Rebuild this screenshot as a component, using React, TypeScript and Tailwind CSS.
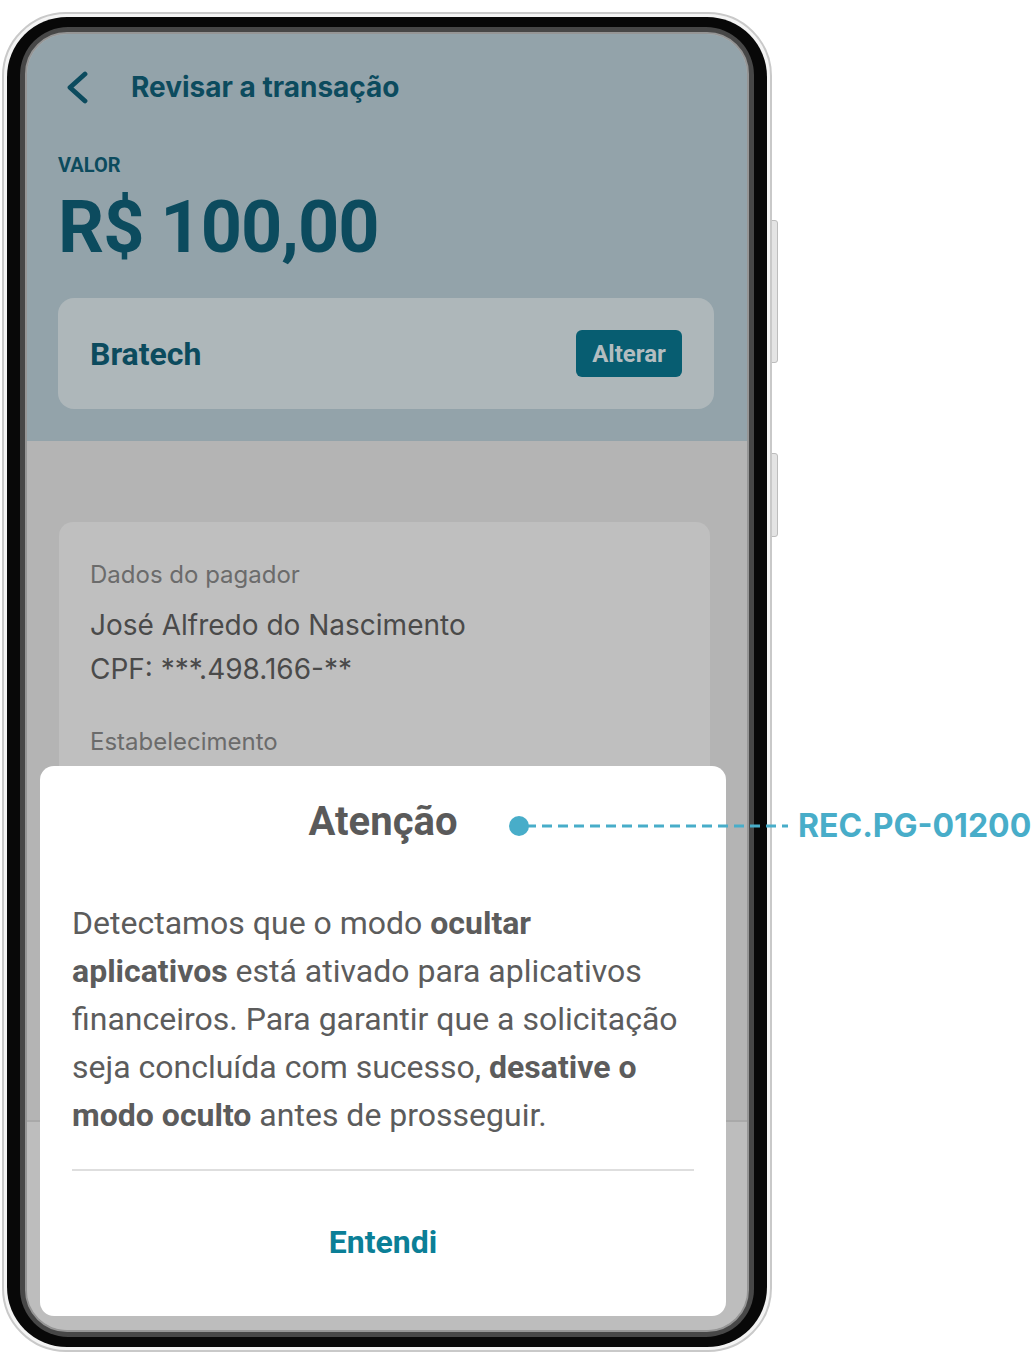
import React from "react";

const roboto = { fontFamily: "Roboto, 'Liberation Sans', sans-serif" };
const inter = { fontFamily: "Inter, 'Liberation Sans', sans-serif" };

export default function App() {
  return (
    <div className="relative w-[1036px] h-[1364px] bg-white overflow-hidden" style={roboto}>
      {/* side buttons */}
      <div className="absolute left-[770px] top-[220px] w-[8px] h-[143px] rounded-r-[3px] bg-[#e4e4e4] border border-[#bdbdbd]" />
      <div className="absolute left-[770px] top-[453px] w-[8px] h-[84px] rounded-r-[3px] bg-[#e4e4e4] border border-[#bdbdbd]" />

      {/* phone */}
      <div className="relative ml-[2px] mt-[12px] w-[770px] h-[1340px] rounded-[64px] border-2 border-[#c9c9c9] bg-[#f4f4f4] p-[3px]">
        <div className="w-full h-full rounded-[60px] bg-[#080808] px-[13px] py-[10px]">
          <div className="w-full h-full rounded-[48px] bg-[#474747] p-[5px]">
            <div className="relative w-full h-full rounded-[42px] border-2 border-[#959595] overflow-hidden bg-[#b4b4b4] flex flex-col">
              {/* header */}
              <div className="h-[407px] shrink-0 bg-[#93a3aa] pl-[31px] pr-[33px] pt-[33px]">
                <div className="flex items-center h-10">
                  <svg width="22" height="33" viewBox="0 0 22 33" className="ml-[8px]">
                    <polyline points="19,3 4,16.5 19,30" fill="none" stroke="#0c4b5e" strokeWidth="4.8" strokeLinecap="round" strokeLinejoin="round" />
                  </svg>
                  <span className="ml-[43px] text-[28px] font-bold text-[#0c4b5e] leading-10" style={inter}>
                    Revisar a transação
                  </span>
                </div>
                <div className="mt-[46px] text-[20px] leading-6 font-bold text-[#0c4b5e]">VALOR</div>
                <div className="mt-[15px] text-[72px] leading-[72px] font-bold text-[#0c4b5e] tracking-[-1px]">R$ 100,00</div>
                <div className="mt-[34px] h-[111px] rounded-2xl bg-[#aeb7ba] flex items-center justify-between pl-[32px] pr-[32px]">
                  <span className="text-[32px] font-bold text-[#0c4b5e]">Bratech</span>
                  <div className="w-[106px] h-[47px] rounded-[6px] bg-[#075d71] flex items-center justify-center text-[24px] font-bold text-[#b3bdc0]">
                    Alterar
                  </div>
                </div>
              </div>

              {/* body */}
              <div className="flex-1 pl-[32px] pr-[37px] pt-[81px]">
                <div className="h-[560px] rounded-[14px] bg-[#bfbfbf] pl-[31px] pt-[38px] text-[#4a4a4a]" style={inter}>
                  <div className="text-[24px] leading-[30px] text-[#6b6b6b]">Dados do pagador</div>
                  <div className="mt-[13px] text-[28px] leading-[44px]">José Alfredo do Nascimento</div>
                  <div className="text-[28px] leading-[44px]">CPF: ***.498.166-**</div>
                  <div className="mt-[36px] text-[24px] leading-[30px] text-[#6b6b6b]">Estabelecimento</div>
                </div>
              </div>
              <div className="h-[210px] shrink-0 bg-[#bdbdbd] border-t-2 border-[#a9a9a9]" />

              {/* dialog */}
              <div className="absolute left-[13px] top-[732px] w-[686px] h-[550px] rounded-[14px] bg-white px-[32px] pt-[34px]">
                <div className="text-center text-[40px] leading-[44px] font-bold text-[#5a5a5a]">Atenção</div>
                <div className="mt-[55px] text-[32px] leading-[48px] text-[#5c5c5c] whitespace-nowrap">
                  Detectamos que o modo <b className="font-bold">ocultar</b>
                  <br />
                  <b className="font-bold">aplicativos</b> está ativado para aplicativos
                  <br />
                  financeiros. Para garantir que a solicitação
                  <br />
                  seja concluída com sucesso, <b className="font-bold">desative o</b>
                  <br />
                  <b className="font-bold">modo oculto</b> antes de prosseguir.
                </div>
                <div className="mt-[30px] h-[2px] bg-[#dedede]" />
                <div className="mt-[51px] text-center text-[32px] leading-10 font-bold text-[#0b7f97]">Entendi</div>
              </div>
            </div>
          </div>
        </div>
      </div>

      {/* annotation */}
      <div className="absolute left-[509px] top-[816px] w-[20px] h-[20px] rounded-full bg-[#48adc9]" />
      <svg className="absolute left-[526px] top-[823px]" width="262" height="6" viewBox="0 0 262 6">
        <line x1="0" y1="3" x2="262" y2="3" stroke="#48adc9" strokeWidth="3" strokeDasharray="10 6" />
      </svg>
      <div className="absolute left-[798px] top-[806px] text-[32px] leading-10 font-bold text-[#48adc9]" style={inter}>
        REC.PG-01200
      </div>
    </div>
  );
}
